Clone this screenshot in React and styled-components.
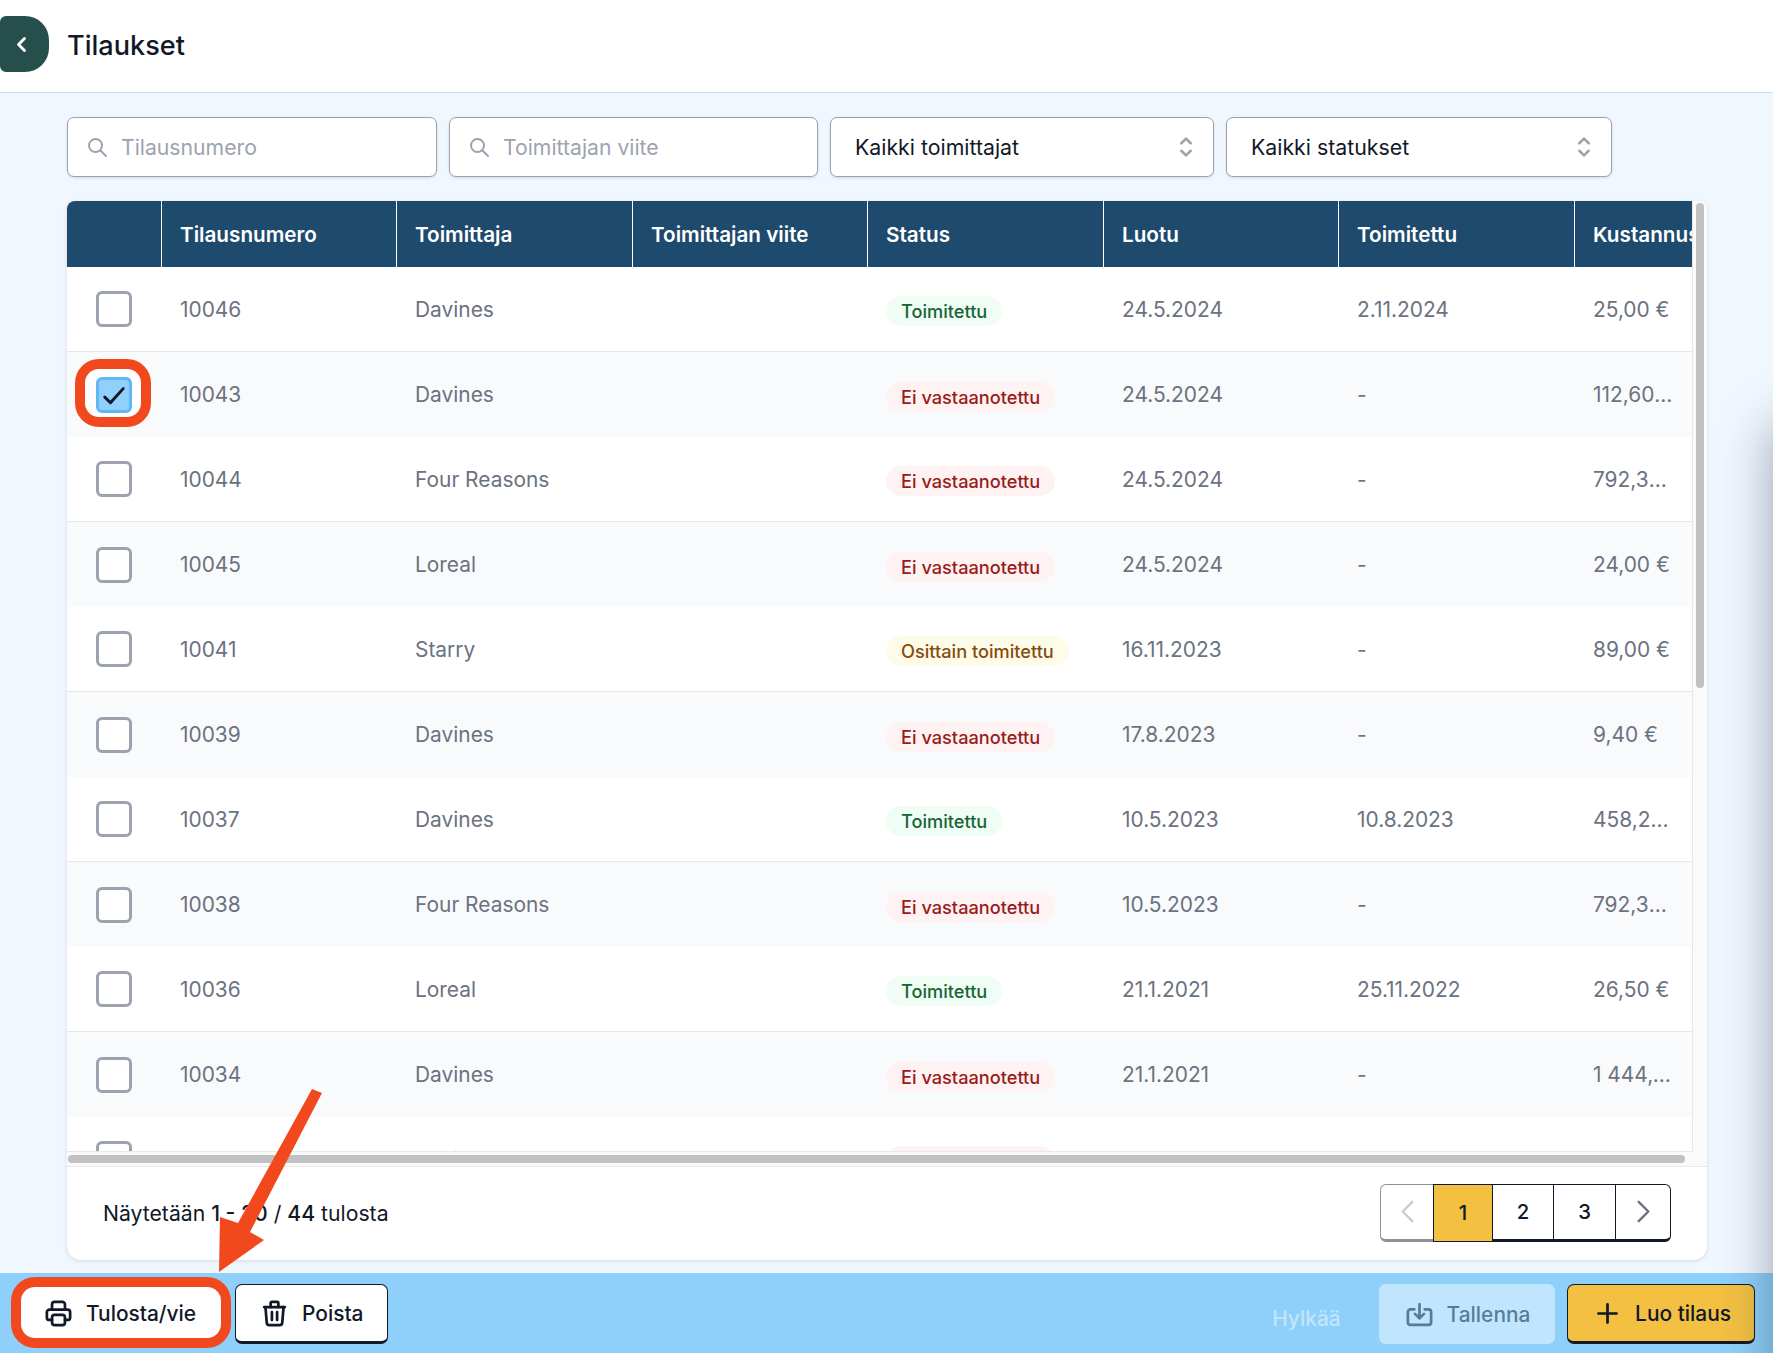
import React from "react";
import styled, { createGlobalStyle } from "styled-components";

const GlobalStyle = createGlobalStyle`
  html, body { margin: 0; padding: 0; height: 100%; overflow: hidden; }
  body { font-family: Inter, "Noto Sans", sans-serif; color: #111827; background: #f0f7fe; }
  * { box-sizing: border-box; }
`;

const Page = styled.div`
  position: relative; display: flex; flex-direction: column; height: 100vh; overflow: hidden; background: #f0f7fe;
`;
const Header = styled.header`
  display: flex; align-items: center; gap: 18px; height: 93px; flex: none; background: #fff; border-bottom: 1px solid #c6dcf3; padding-bottom: 4px;
`;
const BackButton = styled.button`
  display: flex; align-items: center; justify-content: center; width: 49px; height: 56px; padding: 0 6px 0 0; border: 0;
  background: #264f4b; border-radius: 6px 24px 24px 6px; color: #fff;
`;
const Title = styled.h1`
  margin: 4px 0 0; font-size: 27.1px; font-weight: 500; line-height: 1; color: #111827;
`;
const Main = styled.main`
  flex: 1; min-height: 0; display: flex; flex-direction: column; gap: 24px; padding: 24px 66px 13px 67px;
`;
const Filters = styled.div`
  display: grid; grid-template-columns: 370px 369px 384px 386px; gap: 12px; height: 60px; flex: none;
`;
const FieldBox = styled.div`
  display: flex; align-items: center; background: #fff; border: 1px solid #9ca3af; border-radius: 7px;
  box-shadow: 0 1px 3px rgba(0,0,0,.12); padding: 0 ${(p) => (p.$select ? "12px" : "0")} 0 ${(p) => (p.$select ? "24px" : "17px")}; gap: 12px;
`;
const SearchInput = styled.input`
  flex: 1; min-width: 0; border: 0; outline: 0; background: transparent; padding: 0; font: 400 21.2px Inter, sans-serif; color: #111827;
  &::placeholder { color: #9ca3af; opacity: 1; }
`;
const SelectText = styled.span`
  flex: 1; font-size: 21.3px; color: #111827;
`;
const Card = styled.section`
  flex: 1; min-height: 0; display: flex; flex-direction: column; background: #fff; border-radius: 8px 8px 14px 14px; overflow: hidden;
  box-shadow: 0 1px 4px rgba(0,0,0,.12);
`;
const ScrollArea = styled.div`
  display: flex; height: 951px; flex: none;
`;
const Viewport = styled.div`
  flex: 1; min-width: 0; overflow: hidden; border-right: 1px solid #e8e8e8; border-bottom: 1px solid #e8e8e8;
`;
const VTrack = styled.div`
  flex: none; width: 14px; padding: 2px 0 0 3px; background: #fafafa;
`;
const VThumb = styled.div`
  width: 8px; height: 485px; border-radius: 4px; background: #c1c1c1;
`;
const HTrack = styled.div`
  flex: none; height: 15px; padding: 3px 22px 0 1px; background: #fafafa; border-bottom: 1px solid #e8e8e8;
`;
const HThumb = styled.div`
  height: 8px; border-radius: 4px; background: #c1c1c1;
`;
const Table = styled.table`
  border-collapse: separate; border-spacing: 0; table-layout: fixed; width: 1745px;
`;
const Th = styled.th`
  height: 66px; padding: 0 0 0 18px; background: #1e4a6d; color: #fff; text-align: left; font-size: 20.7px; font-weight: 600; white-space: nowrap;
  overflow: hidden; border-right: 1px solid #fff;
  &:last-child { border-right: 0; }
`;
const Tr = styled.tr`
  &:nth-child(even) td { background: #f9fafb; }
  &:nth-child(odd) td { border-bottom: 1px solid #e5e7eb; }
`;
const Td = styled.td`
  height: 85px; padding: 0 0 0 18px; font-size: 20.9px; color: #6b7280; white-space: nowrap; overflow: hidden;
`;
const CheckCell = styled.td`
  height: 85px; padding: 0 2px 0 0; overflow: visible;
`;
const CheckCenter = styled.div`
  display: flex; justify-content: center; align-items: center;
`;
const Check = styled.div`
  display: flex; align-items: center; justify-content: center; width: 36px; height: 36px; flex: none; border-radius: 6px;
  border: 3px solid ${(p) => (p.$on ? "#5fb8f6" : "#9ca3af")}; background: ${(p) => (p.$on ? "#90d0fb" : "#fff")}; color: #111827;
`;
const CheckHighlight = styled.div`
  display: flex; align-items: center; justify-content: center; width: 56px; height: 48px; padding: 4px 0 0 2px; margin: -4px 1px 0 0;
  background: #fff; border-radius: 14px; box-shadow: 0 0 0 10px #f2481d;
`;
const badgeColors = {
  green: ["#f0fdf4", "#166534"],
  red: ["#fef2f2", "#991b1b"],
  yellow: ["#fefce8", "#854d0e"],
};
const Badge = styled.span`
  display: inline-block; margin-top: 4px; padding: 0 15px; height: 30px; line-height: 30px; border-radius: 15px; font-size: 18.2px; font-weight: 500;
  background: ${(p) => badgeColors[p.$tone][0]}; color: ${(p) => badgeColors[p.$tone][1]};
`;
const Cost = styled.div`
  max-width: 80px; overflow: hidden; text-overflow: ellipsis; white-space: nowrap;
`;
const Footer = styled.footer`
  flex: 1; display: flex; align-items: center; justify-content: space-between; padding: 0 36px 2px;
`;
const ResultText = styled.p`
  margin: 0; font-size: 21.2px; color: #111827;
`;
const Strong = styled.span`
  font-weight: 500;
`;
const Pagination = styled.nav`
  display: flex; height: 58px; border-radius: 6px;
`;
const PageBtn = styled.button`
  display: flex; align-items: center; justify-content: center; width: ${(p) => p.$w}px; height: 100%; padding: 0; margin-left: -1px;
  font: 500 20.3px Inter, sans-serif; color: #111827;
  background: ${(p) => (p.$active ? "#f3c042" : "#fff")};
  border: 1px solid #111827; border-bottom-width: ${(p) => (p.$active ? "1px" : "3px")};
  &:first-child { margin-left: 0; border-radius: 6px 0 0 6px; border-color: #8f9199; color: #c9ccd2; }
  &:last-child { border-radius: 0 6px 6px 0; color: #6b7280; }
`;
const BottomBar = styled.div`
  flex: none; height: 80px; display: flex; align-items: flex-start; gap: 14px; padding: 11px 18px 0 21px; background: #8fd0fa;
`;
const ActionButton = styled.button`
  display: flex; align-items: center; gap: 12px; height: 60px; padding: 0 24px 0 23px; font: 500 20.9px Inter, sans-serif; color: #111827;
  background: #fff; border: 1px solid #111827; border-bottom-width: 3px; border-radius: 7px;
`;
const RingedButton = styled(ActionButton)`
  height: 51px; width: 200px; margin-top: 3px; border: 0; border-radius: 14px; padding: 2px 24px 0 22px; box-shadow: 0 0 0 10px #f2481d;
`;
const PrimaryButton = styled(ActionButton)`
  background: #f3c042; padding: 0 23px 0 24px; margin-left: -1.5px;
`;
const SaveButton = styled(ActionButton)`
  width: 176px; padding: 0 0 0 25px; border: 0; opacity: .45;
`;
const RejectLabel = styled.span`
  align-self: center; margin-left: auto; margin-right: 24px; font-size: 20.9px; font-weight: 500; color: #fff; opacity: .45;
`;
const Icon = styled.svg`
  display: block; flex: none; fill: none; stroke: currentColor; stroke-linecap: round; stroke-linejoin: round;
`;
const SearchColor = styled.span`
  display: flex; color: #9ca3af;
`;
const OffscreenPanel = styled.div`
  position: absolute; left: 100%; top: 425px; bottom: -80px; width: 300px; background: #fff;
  box-shadow: 0 0 48px 0 rgba(30, 40, 60, .4);
`;
const ArrowLayer = styled.svg`
  position: absolute; left: 0; top: 0; width: 100%; height: 100%; pointer-events: none;
`;

const Svg = ({ size = 31, sw = 2.1, children }) => (
  <Icon width={size} height={size} viewBox="0 0 24 24" strokeWidth={sw}>{children}</Icon>
);
const SearchIcon = () => (
  <SearchColor>
    <Svg size={24} sw={2}><circle cx="10.5" cy="10.5" r="6.5" /><path d="M15.5 15.5 21 21" /></Svg>
  </SearchColor>
);
const UpDown = () => (
  <SearchColor><Svg size={30} sw={2}><path d="M8.25 15 12 18.75 15.75 15m-7.5-6L12 5.25 15.75 9" /></Svg></SearchColor>
);
const Chevron = ({ dir, size, sw }) => (
  <Svg size={size} sw={sw}><path d={dir === "left" ? "M15.75 19.5 8.25 12l7.5-7.5" : "M8.25 4.5 15.75 12l-7.5 7.5"} /></Svg>
);

const rows = [
  ["10046", "Davines", "green", "Toimitettu", "24.5.2024", "2.11.2024", "25,00 €"],
  ["10043", "Davines", "red", "Ei vastaanotettu", "24.5.2024", "-", "112,60 €"],
  ["10044", "Four Reasons", "red", "Ei vastaanotettu", "24.5.2024", "-", "792,30 €"],
  ["10045", "Loreal", "red", "Ei vastaanotettu", "24.5.2024", "-", "24,00 €"],
  ["10041", "Starry", "yellow", "Osittain toimitettu", "16.11.2023", "-", "89,00 €"],
  ["10039", "Davines", "red", "Ei vastaanotettu", "17.8.2023", "-", "9,40 €"],
  ["10037", "Davines", "green", "Toimitettu", "10.5.2023", "10.8.2023", "458,20 €"],
  ["10038", "Four Reasons", "red", "Ei vastaanotettu", "10.5.2023", "-", "792,30 €"],
  ["10036", "Loreal", "green", "Toimitettu", "21.1.2021", "25.11.2022", "26,50 €"],
  ["10034", "Davines", "red", "Ei vastaanotettu", "21.1.2021", "-", "1 444,00 €"],
  ["10035", "Davines", "red", "Ei vastaanotettu", "21.1.2021", "-", "9,40 €"],
];
const heads = ["", "Tilausnumero", "Toimittaja", "Toimittajan viite", "Status", "Luotu", "Toimitettu", "Kustannus"];
const widths = [95, 235, 236, 235, 236, 235, 236, 237];

const CheckMark = () => (
  <Svg size={34} sw={2.1}><path d="M5.5 13.5l4 4L18.5 7.5" /></Svg>
);

export default function App() {
  return (
    <Page>
      <GlobalStyle />
      <Header>
        <BackButton aria-label="Takaisin"><Chevron dir="left" size={19} sw={3.6} /></BackButton>
        <Title>Tilaukset</Title>
      </Header>
      <Main>
        <Filters>
          <FieldBox><SearchIcon /><SearchInput placeholder="Tilausnumero" readOnly /></FieldBox>
          <FieldBox><SearchIcon /><SearchInput placeholder="Toimittajan viite" readOnly /></FieldBox>
          <FieldBox $select><SelectText>Kaikki toimittajat</SelectText><UpDown /></FieldBox>
          <FieldBox $select><SelectText>Kaikki statukset</SelectText><UpDown /></FieldBox>
        </Filters>
        <Card>
          <ScrollArea>
            <Viewport>
              <Table>
                <colgroup>{widths.map((w, i) => <col key={i} width={w} />)}</colgroup>
                <thead>
                  <tr>{heads.map((h, i) => <Th key={i}>{h}</Th>)}</tr>
                </thead>
                <tbody>
                  {rows.map((r, i) => (
                    <Tr key={r[0]}>
                      <CheckCell>
                        <CheckCenter>
                          {i === 1 ? (
                            <CheckHighlight><Check $on><CheckMark /></Check></CheckHighlight>
                          ) : (
                            <Check />
                          )}
                        </CheckCenter>
                      </CheckCell>
                      <Td>{r[0]}</Td>
                      <Td>{r[1]}</Td>
                      <Td />
                      <Td><Badge $tone={r[2]}>{r[3]}</Badge></Td>
                      <Td>{r[4]}</Td>
                      <Td>{r[5]}</Td>
                      <Td><Cost>{r[6]}</Cost></Td>
                    </Tr>
                  ))}
                </tbody>
              </Table>
            </Viewport>
            <VTrack><VThumb /></VTrack>
          </ScrollArea>
          <HTrack><HThumb /></HTrack>
          <Footer>
            <ResultText>Näytetään <Strong>1 - 20</Strong> / <Strong>44</Strong> tulosta</ResultText>
            <Pagination>
              <PageBtn $w={54} aria-label="Edellinen"><Chevron dir="left" size={31} sw={1.9} /></PageBtn>
              <PageBtn $w={60} $active>1</PageBtn>
              <PageBtn $w={62}>2</PageBtn>
              <PageBtn $w={63}>3</PageBtn>
              <PageBtn $w={56} aria-label="Seuraava"><Chevron dir="right" size={31} sw={1.9} /></PageBtn>
            </Pagination>
          </Footer>
        </Card>
      </Main>
      <BottomBar>
        <RingedButton>
          <Svg>
            <path d="M17 17h2a2 2 0 0 0 2-2v-4a2 2 0 0 0-2-2H5a2 2 0 0 0-2 2v4a2 2 0 0 0 2 2h2" />
            <path d="M17 9V5a2 2 0 0 0-2-2H9a2 2 0 0 0-2 2v4" />
            <path d="M7 15a2 2 0 0 1 2-2h6a2 2 0 0 1 2 2v4a2 2 0 0 1-2 2H9a2 2 0 0 1-2-2z" />
          </Svg>
          Tulosta/vie
        </RingedButton>
        <ActionButton>
          <Svg>
            <path d="M4 7h16M10 11v6M14 11v6" />
            <path d="M5 7l1 12a2 2 0 0 0 2 2h8a2 2 0 0 0 2-2l1-12" />
            <path d="M9 7V4a1 1 0 0 1 1-1h4a1 1 0 0 1 1 1v3" />
          </Svg>
          Poista
        </ActionButton>
        <RejectLabel>Hylkää</RejectLabel>
        <SaveButton>
          <Svg>
            <path d="M8 8H5a2 2 0 0 0-2 2v8a2 2 0 0 0 2 2h14a2 2 0 0 0 2-2v-8a2 2 0 0 0-2-2h-3" />
            <path d="M12 4v11M8.5 11.5 12 15l3.5-3.5" />
          </Svg>
          Tallenna
        </SaveButton>
        <PrimaryButton>
          <Svg><path d="M12 5v14M5 12h14" /></Svg>
          Luo tilaus
        </PrimaryButton>
      </BottomBar>
      <OffscreenPanel />
      <ArrowLayer viewBox="0 0 1773 1353" aria-hidden="true">
        <polygon fill="#f2481d" points="312,1089 322,1093 250,1232 264,1240 219,1272 220,1217 238,1223" />
      </ArrowLayer>
    </Page>
  );
}
